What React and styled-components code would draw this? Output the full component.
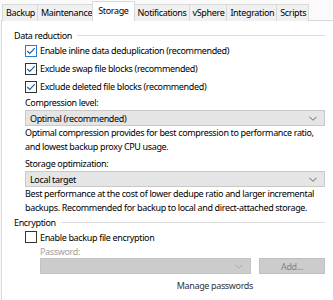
import React from "react";
import styled, { createGlobalStyle, css } from "styled-components";

const Global = createGlobalStyle`
  html, body { margin: 0; padding: 0; }
  body {
    background: #fafafa;
    font-family: "Noto Sans", "Open Sans", sans-serif;
    font-size: 9px;
    letter-spacing: -0.35px;
    color: #000;
    width: 333px;
    height: 300px;
    overflow: hidden;
  }
`;

const Frame = styled.div`
  display: flex;
  flex-direction: column;
  padding: 2px 0 0 1px;
`;

const TabBar = styled.div`
  display: flex;
  align-items: flex-end;
  height: 19px;
  padding-left: 1px;
  position: relative;
  z-index: 1;
`;

const Tab = styled.div`
  box-sizing: border-box;
  height: 17px;
  line-height: 16px;
  padding: 0 2px 0 3px;
  border: 1px solid #d9d9d9;
  border-bottom: none;
  background: #f0f0f0;
  margin-right: -1px;
  white-space: nowrap;
  ${(p) =>
    p.$active &&
    css`
      height: 20px;
      line-height: 18px;
      background: #fff;
      margin: 0 -1px 0 -2px;
      padding: 0 5px;
      position: relative;
      z-index: 2;
    `}
`;

const Panel = styled.div`
  box-sizing: border-box;
  background: #fff;
  border: 1px solid #d9d9d9;
  border-right: none;
  margin-top: -1px;
  height: 282px;
  padding: 7px 8px 0 12px;
  display: flex;
  flex-direction: column;
  white-space: nowrap;
`;

const GroupHeader = styled.div`
  display: flex;
  align-items: center;
  gap: 5px;
  height: 14px;
  &::after {
    content: "";
    flex: 1;
    border-top: 1px solid #dcdcdc;
    margin-top: 1px;
  }
`;

const GroupBody = styled.div`
  display: flex;
  flex-direction: column;
  padding-left: 11px;
`;

const CheckRow = styled.label`
  display: flex;
  align-items: center;
  gap: 3px;
  height: ${(p) => p.$h || 17}px;
  margin-bottom: ${(p) => p.$mb || 0}px;
`;

const Box = styled.span`
  box-sizing: border-box;
  width: 12px;
  height: 12px;
  border: 1px solid ${(p) => (p.$focus ? "#2f7ad0" : "#333")};
  background: #fff;
  display: flex;
  align-items: center;
  justify-content: center;
`;

const Label = styled.div`
  height: ${(p) => p.$h || 14}px;
  line-height: ${(p) => p.$h || 14}px;
  margin-top: ${(p) => p.$top || 0}px;
  color: ${(p) => (p.$muted ? "#a0a0a0" : "#000")};
`;

const Select = styled.div`
  box-sizing: border-box;
  height: 16px;
  border: 1px solid ${(p) => (p.$disabled ? "#c4c4c4" : "#c9c9c9")};
  background: ${(p) => (p.$disabled ? "#cccccc" : "#e5e5e5")};
  display: flex;
  align-items: center;
  justify-content: space-between;
  padding: 0 7px 0 4px;
  flex: ${(p) => (p.$grow ? 1 : "none")};
`;

const Desc = styled.div`
  line-height: 14px;
`;

const PwRow = styled.div`
  display: flex;
  gap: 8px;
`;

const Button = styled.div`
  box-sizing: border-box;
  width: 66px;
  height: 16px;
  background: #cccccc;
  border: 1px solid #bfbfbf;
  color: #838383;
  display: flex;
  align-items: center;
  justify-content: center;
`;

const PwCol = styled.div`
  display: flex;
  flex-direction: column;
  padding-left: 15px;
`;

const LinkRow = styled.div`
  display: flex;
  justify-content: flex-end;
  padding-right: 72px;
  margin-top: 5px;
  line-height: 14px;
  color: #333;
`;

const Check = () => (
  <svg width="10" height="10" viewBox="0 0 10 10">
    <path d="M1.3 5 L3.8 7.5 L8.8 2.2" fill="none" stroke="#1f5d9e" strokeWidth="1.1" />
  </svg>
);

const Chevron = ({ color = "#666" }) => (
  <svg width="8" height="5" viewBox="0 0 8 5">
    <path d="M0.5 0.8 L4 4.3 L7.5 0.8" fill="none" stroke={color} strokeWidth="1" />
  </svg>
);

const tabs = ["Backup", "Maintenance", "Storage", "Notifications", "vSphere", "Integration", "Scripts"];

export default function App() {
  return (
    <>
      <Global />
      <Frame>
        <TabBar>
          {tabs.map((t) => (
            <Tab key={t} $active={t === "Storage"}>
              {t}
            </Tab>
          ))}
        </TabBar>
        <Panel>
          <GroupHeader>Data reduction</GroupHeader>
          <GroupBody>
            <CheckRow $mb={1}>
              <Box $focus>
                <Check />
              </Box>
              Enable inline data deduplication (recommended)
            </CheckRow>
            <CheckRow $mb={1}>
              <Box>
                <Check />
              </Box>
              Exclude swap file blocks (recommended)
            </CheckRow>
            <CheckRow>
              <Box>
                <Check />
              </Box>
              Exclude deleted file blocks (recommended)
            </CheckRow>
            <Label $top={1}>Compression level:</Label>
            <Select>
              <span>Optimal (recommended)</span>
              <Chevron />
            </Select>
            <Desc>
              Optimal compression provides for best compression to performance ratio,
              <br />
              and lowest backup proxy CPU usage.
            </Desc>
            <Label $top={3}>Storage optimization:</Label>
            <Select>
              <span>Local target</span>
              <Chevron />
            </Select>
            <Desc>
              Best performance at the cost of lower dedupe ratio and larger incremental
              <br />
              backups. Recommended for backup to local and direct-attached storage.
            </Desc>
          </GroupBody>
          <GroupHeader>Encryption</GroupHeader>
          <GroupBody>
            <CheckRow $h={16}>
              <Box />
              Enable backup file encryption
            </CheckRow>
            <PwCol>
              <Label $muted $h={13}>Password:</Label>
              <PwRow>
                <Select $disabled $grow>
                  <span />
                  <Chevron color="#a8a8a8" />
                </Select>
                <Button>Add...</Button>
              </PwRow>
              <LinkRow>Manage passwords</LinkRow>
            </PwCol>
          </GroupBody>
        </Panel>
      </Frame>
    </>
  );
}
